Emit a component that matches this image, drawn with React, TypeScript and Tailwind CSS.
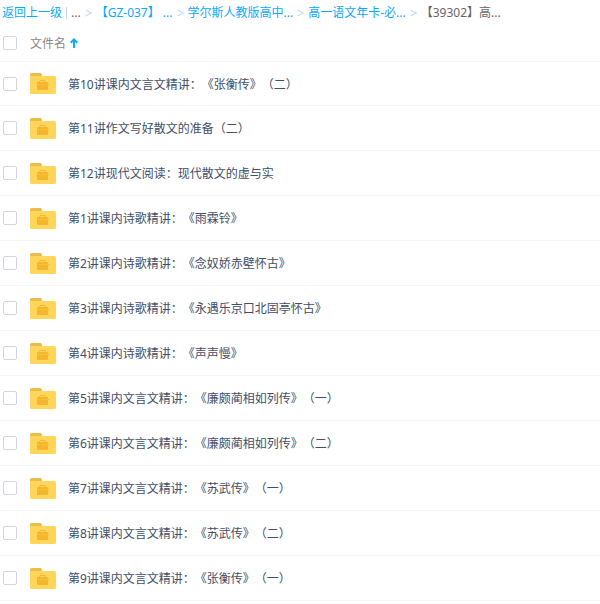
import { useState } from 'react';

const crumbs = ['【GZ-037】 ...', '学尔斯人教版高中...', '高一语文年卡-必...'];

const files = [
  '第10讲课内文言文精讲：《张衡传》（二）',
  '第11讲作文写好散文的准备（二）',
  '第12讲现代文阅读：现代散文的虚与实',
  '第1讲课内诗歌精讲：《雨霖铃》',
  '第2讲课内诗歌精讲：《念奴娇赤壁怀古》',
  '第3讲课内诗歌精讲：《永遇乐京口北固亭怀古》',
  '第4讲课内诗歌精讲：《声声慢》',
  '第5讲课内文言文精讲：《廉颇蔺相如列传》（一）',
  '第6讲课内文言文精讲：《廉颇蔺相如列传》（二）',
  '第7讲课内文言文精讲：《苏武传》（一）',
  '第8讲课内文言文精讲：《苏武传》（二）',
  '第9讲课内文言文精讲：《张衡传》（一）',
];

const checkboxClass =
  'block h-3.5 w-3.5 cursor-pointer appearance-none rounded-xs border border-[#d0d5e3] bg-white checked:border-[#06a7ff] checked:bg-[#06a7ff]';

function FolderIcon() {
  return (
    <svg width="26" height="21" viewBox="0 0 26 21" className="shrink-0" aria-hidden="true">
      <path d="M0 1.5A1.5 1.5 0 0 1 1.5 0h8.7c.8 0 1.3.5 1.5 1.2L12.5 4H0z" fill="#ebbb4b" />
      <path d="M0 3h24.5A1.5 1.5 0 0 1 26 4.5v15a1.5 1.5 0 0 1-1.5 1.5h-23A1.5 1.5 0 0 1 0 19.5z" fill="#ffd65a" />
      <path d="M9.5 9.5V8.7Q9.500 7.500 10.700 7.500h3.600q1.200 0 1.200 1.200v.8" fill="none" stroke="#f4b62f" />
      <path d="M8 9h9q1 0 1 1v1.500H7V10q0-1 1-1z" fill="#f4b62f" />
      <path d="M7 12h11v4q0 1-1 1H8q-1 0-1-1z" fill="#f4b62f" />
      <path d="M7 11.500h12.500" stroke="#fbc02b" />
    </svg>
  );
}

function Separator() {
  return (
    <svg width="7" height="8" viewBox="0 0 7 8" className="shrink-0" aria-hidden="true">
      <path d="M.5 1l5.800 3L.5 7" fill="none" stroke="#c4d8f4" strokeWidth="1.100" />
    </svg>
  );
}

export default function App() {
  const [selected, setSelected] = useState<string[]>([]);
  const [ascending, setAscending] = useState(true);

  const rows = ascending ? files : [...files].reverse();

  const toggle = (name: string) => {
    setSelected((prev) =>
      prev.includes(name) ? prev.filter((item) => item !== name) : [...prev, name],
    );
  };

  return (
    <div className="bg-white font-['Noto_Sans','Noto_Sans_CJK_SC',sans-serif] text-xs text-[#424e67] [text-spacing-trim:space-all]">
      <nav
        aria-label="路径"
        className="flex h-6 items-center gap-1 pt-0.5 pl-0.5 whitespace-nowrap text-[#09aaff]"
      >
        <a href="#back">返回上一级</a>
        <span className="h-3 w-px bg-[#c4d8f4]" />
        <span className="text-[#666666]">...</span>
        {crumbs.map((crumb) => (
          <span key={crumb} className="flex items-center gap-1">
            <Separator />
            <a href="#folder">{crumb}</a>
          </span>
        ))}
        <Separator />
        <span className="text-[#666666]">【39302】高...</span>
      </nav>

      <table className="w-full border-separate border-spacing-0 text-left">
        <thead>
          <tr className="h-[38px]">
            <th className="w-[30px] border-b border-[#f2f4f9] p-0 pl-[3px]">
              <input
                type="checkbox"
                aria-label="全选"
                className={checkboxClass}
                checked={selected.length === files.length}
                onChange={(e) => setSelected(e.target.checked ? files : [])}
              />
            </th>
            <th className="border-b border-[#f2f4f9] p-0 font-normal text-[#888888]">
              <button
                type="button"
                onClick={() => setAscending(!ascending)}
                className="flex cursor-pointer items-center gap-1"
              >
                <span className="pt-0.5">文件名</span>
                <svg
                  width="8"
                  height="10"
                  viewBox="0 0 8 10"
                  className={ascending ? '' : 'rotate-180'}
                  aria-hidden="true"
                >
                  <path d="M4 10V1.500M.7 4.700L4 1.400l3.300 3.300" fill="none" stroke="#09aaff" strokeWidth="2" />
                </svg>
              </button>
            </th>
          </tr>
        </thead>
        <tbody>
          {rows.map((name, i) => (
            <tr key={name} className="h-[45px] first:h-11 hover:bg-[#f7f9fc]">
              <td className="border-b border-[#f2f4f9] p-0 pl-[3px]">
                <input
                  type="checkbox"
                  id={`file-${i}`}
                  className={checkboxClass}
                  checked={selected.includes(name)}
                  onChange={() => toggle(name)}
                />
              </td>
              <td className="border-b border-[#f2f4f9] p-0">
                <label htmlFor={`file-${i}`} className="flex cursor-pointer items-center gap-3">
                  <FolderIcon />
                  <span className="pt-0.5">{name}</span>
                </label>
              </td>
            </tr>
          ))}
        </tbody>
      </table>
    </div>
  );
}
